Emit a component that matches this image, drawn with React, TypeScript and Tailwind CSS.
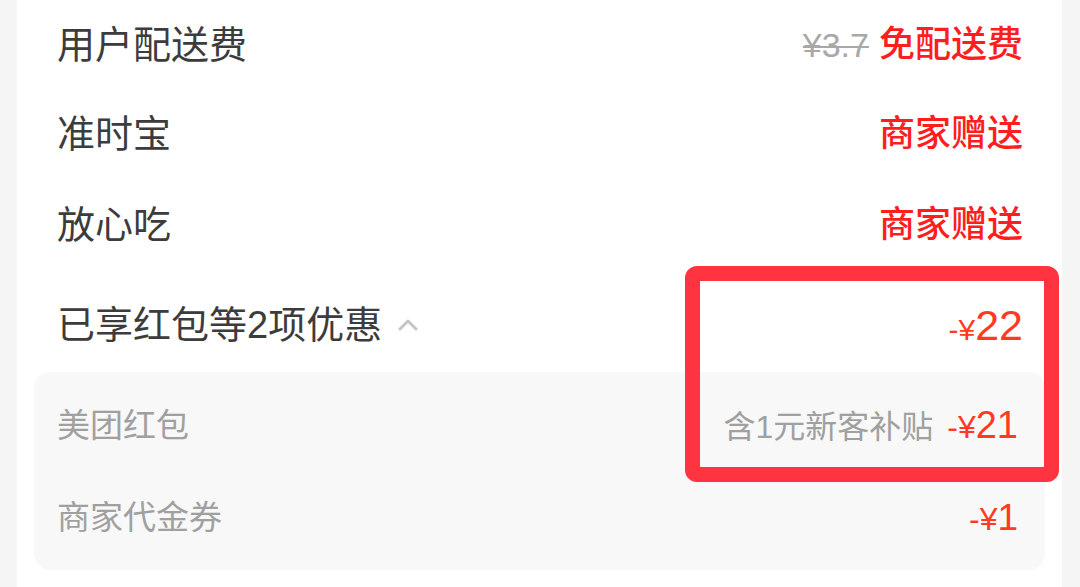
import type React from "react";

interface FeeRowProps {
  label: string;
  children: React.ReactNode;
  className?: string;
}

function FeeRow({ label, children, className = "" }: FeeRowProps) {
  return (
    <div className={`flex items-center justify-between pl-[40px] pr-[39px] ${className}`}>
      <span className="text-[38px] leading-none text-[#3c3c3c]">{label}</span>
      <div className="flex items-center">{children}</div>
    </div>
  );
}

function SubRow({ label, children }: { label: string; children: React.ReactNode }) {
  return (
    <div className="flex h-[92px] items-center justify-between pl-[23px] pr-[27px]">
      <span className="text-[33px] leading-none text-[#a0a0a0]">{label}</span>
      <div className="flex items-baseline">{children}</div>
    </div>
  );
}

export default function App() {
  return (
    <div className="relative flex h-[587px] w-[1080px] overflow-hidden bg-[#f5f5f5] font-['Liberation_Sans','Noto_Sans_CJK_SC',sans-serif]">
      <div className="ml-[17px] mr-[18px] flex flex-1 flex-col bg-white">
        <FeeRow label="用户配送费" className="h-[89px]">
          <span className="mr-[10px] text-[34px] leading-none text-[#a8a8a8] line-through decoration-[2px]">
            ¥3.7
          </span>
          <span className="text-[36px] font-medium leading-none text-[#ff1e1e]">免配送费</span>
        </FeeRow>
        <FeeRow label="准时宝" className="h-[90px]">
          <span className="text-[36px] font-medium leading-none text-[#ff1e1e]">商家赠送</span>
        </FeeRow>
        <FeeRow label="放心吃" className="h-[91px]">
          <span className="text-[36px] font-medium leading-none text-[#ff1e1e]">商家赠送</span>
        </FeeRow>
        <FeeRow label="已享红包等2项优惠" className="h-[102px] pt-[8px]">
          <span className="flex items-baseline leading-none text-[#ff3b1f]">
            <span className="text-[30px]">-¥</span>
            <span className="text-[43px]">22</span>
          </span>
        </FeeRow>

        <div className="mx-[17px] rounded-[16px] bg-[#f8f8f8] py-[7px]">
          <SubRow label="美团红包">
            <span className="mr-[14px] text-[32px] leading-none text-[#a0a0a0]">含1元新客补贴</span>
            <span className="flex items-baseline leading-none text-[#ff3b1f]">
              <span className="text-[32px]">-¥</span>
              <span className="text-[38px]">21</span>
            </span>
          </SubRow>
          <SubRow label="商家代金券">
            <span className="flex items-baseline leading-none text-[#ff3b1f]">
              <span className="text-[32px]">-¥</span>
              <span className="text-[37px]">1</span>
            </span>
          </SubRow>
        </div>
      </div>

      {/* chevron next to the discount label */}
      <svg
        className="absolute left-[398px] top-[318px]"
        width="20"
        height="13"
        viewBox="0 0 20 13"
        fill="none"
      >
        <path d="M2 11 L10 3 L18 11" stroke="#c4c4c4" strokeWidth="3" strokeLinecap="round" strokeLinejoin="round" />
      </svg>

      {/* red annotation box */}
      <div className="pointer-events-none absolute left-[685px] top-[266px] h-[216px] w-[374px] rounded-[12px] border-[15px] border-[#ff3440]" />
    </div>
  );
}
